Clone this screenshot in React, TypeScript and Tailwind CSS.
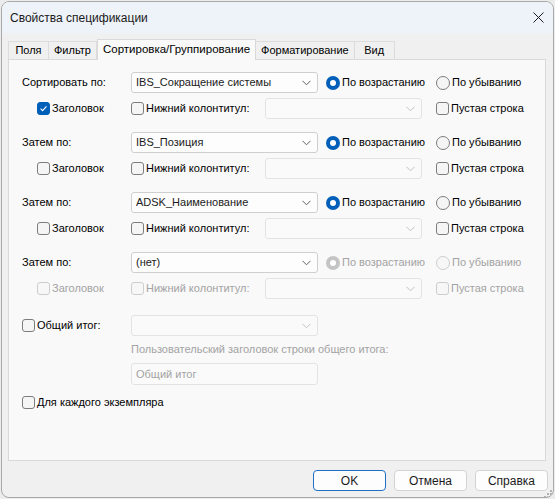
import clsx from "clsx";

type SortRow = {
  label: string;
  field: string;
  header?: boolean;
  disabled?: boolean;
};

const sortRows: SortRow[] = [
  { label: "Сортировать по:", field: "IBS_Сокращение системы", header: true },
  { label: "Затем по:", field: "IBS_Позиция" },
  { label: "Затем по:", field: "ADSK_Наименование" },
  { label: "Затем по:", field: "(нет)", disabled: true },
];

const tabs = ["Поля", "Фильтр", "Сортировка/Группирование", "Форматирование", "Вид"];

function Check({ checked, disabled }: { checked?: boolean; disabled?: boolean }) {
  return (
    <span
      className={clsx(
        "flex h-[13px] w-[13px] shrink-0 items-center justify-center rounded-[3px] border",
        checked
          ? "border-[#005fb8] bg-[#005fb8]"
          : disabled
            ? "border-[#cdcdcd] bg-[#f7f7f7]"
            : "border-[#7d7d7d] bg-[#f5f5f5]"
      )}
    >
      {checked && (
        <svg width="9" height="9" viewBox="0 0 9 9">
          <path d="M1.6 4.7 L3.6 6.6 L7.5 2.3" stroke="white" strokeWidth="1.1" fill="none" />
        </svg>
      )}
    </span>
  );
}

function Radio({ checked, disabled }: { checked?: boolean; disabled?: boolean }) {
  if (checked) {
    return (
      <span
        className={clsx(
          "flex h-[14px] w-[14px] shrink-0 items-center justify-center rounded-full",
          disabled ? "bg-[#c4c4c4]" : "bg-[#005fb8]"
        )}
      >
        <span className="h-[6px] w-[6px] rounded-full bg-white" />
      </span>
    );
  }
  return (
    <span
      className={clsx(
        "h-[14px] w-[14px] shrink-0 rounded-full border",
        disabled ? "border-[#cdcdcd] bg-[#f7f7f7]" : "border-[#7d7d7d] bg-[#f5f5f5]"
      )}
    />
  );
}

function Chevron({ disabled }: { disabled?: boolean }) {
  return (
    <svg width="9" height="6" viewBox="0 0 9 6" className="shrink-0">
      <path
        d="M0.5 0.8 L4.5 4.8 L8.5 0.8"
        stroke={disabled ? "#c2c2c2" : "#5f5f5f"}
        strokeWidth="1"
        fill="none"
      />
    </svg>
  );
}

function Combo({ value, disabled, className }: { value?: string; disabled?: boolean; className: string }) {
  return (
    <div
      className={clsx(
        "flex items-center justify-between rounded-[3px] border pl-[4px] pr-[6px]",
        disabled ? "border-[#e3e3e3] bg-[#fafafa]" : "border-[#cfcfcf] bg-[#fdfdfd]",
        className
      )}
    >
      <span className="text-[#1b1b1b]">{value}</span>
      <Chevron disabled={disabled} />
    </div>
  );
}

function Option({
  children,
  checked,
  disabled,
  radio,
  className,
}: {
  children: string;
  checked?: boolean;
  disabled?: boolean;
  radio?: boolean;
  className?: string;
}) {
  return (
    <div className={clsx("flex items-center gap-[2px]", className)}>
      {radio ? <Radio checked={checked} disabled={disabled} /> : <Check checked={checked} disabled={disabled} />}
      <span className={disabled ? "text-[#a3a3a3]" : "text-black"}>{children}</span>
    </div>
  );
}

function SortGroup({ row }: { row: SortRow }) {
  const off = row.disabled;
  return (
    <div className="flex flex-col gap-[5px]">
      <div className="flex h-[21px] items-center">
        <span className="w-[109px]">{row.label}</span>
        <Combo value={row.field} className="h-[21px] w-[187px]" />
        <Option radio checked disabled={off} className="ml-[8px] w-[110px]">
          По возрастанию
        </Option>
        <Option radio disabled={off}>
          По убыванию
        </Option>
      </div>
      <div className="flex h-[21px] items-center pl-[15px]">
        <Option checked={row.header} disabled={off} className="w-[94px]">
          Заголовок
        </Option>
        <Option disabled={off} className="w-[134px]">
          Нижний колонтитул:
        </Option>
        <Combo disabled className="h-[21px] w-[157px]" />
        <Option disabled={off} className="ml-[14px]">
          Пустая строка
        </Option>
      </div>
    </div>
  );
}

function Button({ children, primary }: { children: string; primary?: boolean }) {
  return (
    <div
      className={clsx(
        "flex h-[21px] w-[73px] items-center justify-center rounded-[4px] border bg-[#fdfdfd] text-[12px] text-[#1b1b1b]",
        primary ? "border-[#1f6fc5]" : "border-[#d3d3d3]"
      )}
    >
      {children}
    </div>
  );
}

export default function App() {
  return (
    <div className="h-[499px] w-[555px] bg-[#ececec] p-px font-['Liberation_Sans',Arial,sans-serif] text-[11px] text-black">
      <div className="flex h-[497px] w-[553px] flex-col overflow-hidden rounded-[8px] border border-[#a9a9a9] bg-[#f0f0f0]">
        {/* title bar */}
        <div className="flex h-[31px] shrink-0 items-center justify-between bg-[#eef2f9] pl-[8px] pr-[9px]">
          <span className="text-[12px] text-[#1a1a1a]">Свойства спецификации</span>
          <svg width="11" height="11" viewBox="0 0 11 11">
            <path d="M0.5 0.5 L10.5 10.5 M10.5 0.5 L0.5 10.5" stroke="#1a1a1a" strokeWidth="1" />
          </svg>
        </div>

        {/* tabs */}
        <div className="flex h-[26px] items-end pl-[6px]">
          {tabs.map((t, i) => {
            const active = i === 2;
            return (
              <div
                key={t}
                className={clsx(
                  "flex min-w-[41px] items-center justify-center border border-b-0 px-[5px]",
                  active
                    ? "relative z-10 -mb-px h-[21px] border-[#d9d9d9] bg-[#f9f9f9] text-[11.5px]"
                    : "h-[18px] border-[#dcdcdc] bg-[#f0f0f0]",
                  i > 0 && !active && "-ml-px"
                )}
              >
                {t}
              </div>
            );
          })}
        </div>

        {/* panel */}
        <div className="ml-[6px] h-[402px] w-[538px] border border-[#d9d9d9] bg-[#f9f9f9] pl-[13px] pt-[12px]">
          <div className="flex flex-col gap-[13px]">
            {sortRows.map((r, i) => (
              <SortGroup key={i} row={r} />
            ))}
          </div>

          <div className="mt-[16px] flex h-[21px] items-center">
            <Option className="w-[109px]">Общий итог:</Option>
            <Combo disabled className="h-[21px] w-[187px]" />
          </div>
          <div className="ml-[109px] mt-[6px] h-[14px] leading-[14px] text-[#a3a3a3]">
            Пользовательский заголовок строки общего итога:
          </div>
          <div className="ml-[109px] mt-[7px] flex h-[22px] w-[187px] items-center rounded-[3px] border border-[#e3e3e3] bg-[#fafafa] pl-[4px] text-[#a3a3a3]">
            Общий итог
          </div>
          <div className="mt-[7px] flex h-[21px] items-center">
            <Option>Для каждого экземпляра</Option>
          </div>
        </div>

        {/* buttons */}
        <div className="relative mt-[9px] flex justify-end gap-[8px] pr-[5px]">
          <Button primary>OK</Button>
          <Button>Отмена</Button>
          <Button>Справка</Button>
          <svg width="8" height="8" viewBox="0 0 8 8" className="absolute -bottom-[7px] right-[1px]">
            {[
              [6, 0],
              [6, 3],
              [3, 3],
              [6, 6],
              [3, 6],
              [0, 6],
            ].map(([x, y], k) => (
              <rect key={k} x={x} y={y} width="2" height="2" fill="#b0b0b0" />
            ))}
          </svg>
        </div>
      </div>
    </div>
  );
}
